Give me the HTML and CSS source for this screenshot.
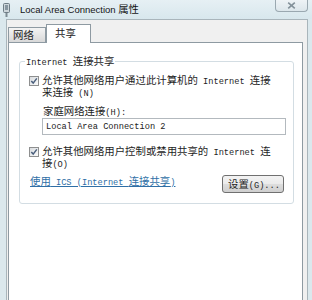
FILE: index.html
```html
<!DOCTYPE html>
<html lang="zh-CN">
<head>
<meta charset="utf-8">
<title>Local Area Connection 属性</title>
<link rel="stylesheet" href="styles.css">
</head>
<body>
<div class="window">
  <header class="titlebar">
    <svg class="app-icon" viewBox="0 0 7 14" width="7" height="14">
      <rect x="0.5" y="0.5" width="6" height="9" rx="1" fill="#cdd6db" stroke="#6f7d86"/>
      <rect x="2" y="2" width="3" height="5" fill="#8796a0"/>
      <rect x="2.5" y="10" width="2" height="4" fill="#7d8b93"/>
    </svg>
    <span class="title">Local Area Connection <span class="title-cjk">属性</span></span>
    <button class="close" type="button" aria-label="关闭">
      <svg viewBox="0 0 9 7" width="9" height="7">
        <path d="M1.2 0.6 L7.8 6.4 M7.8 0.6 L1.2 6.4" stroke="#83919a" stroke-width="1.6" fill="none"/>
      </svg>
    </button>
  </header>
  <div class="client">
    <div class="tabs">
      <div class="tab">网络</div>
      <div class="tab active">共享</div>
    </div>
    <div class="page">
      <fieldset class="group">
        <legend><span class="lat">Internet </span>连接共享</legend>
        <div class="group-body">
          <div class="check-row">
            <span class="checkbox"><svg viewBox="0 0 8 8" width="8" height="8"><path d="M1.3 3.9 L3.2 6.1 L6.8 1.4" fill="none" stroke="#4b5f7c" stroke-width="1.5"/></svg></span>
            <div class="check-text">允许其他网络用户通过此计算机的<span class="lat"> Internet </span>连接<br>来连接<span class="lat"> (N)</span></div>
          </div>
          <div class="field">
            <label class="field-label" for="home">家庭网络连接<span class="lat">(H):</span></label>
            <input class="field-input" id="home" type="text" value="Local Area Connection 2" readonly>
          </div>
          <div class="check-row second">
            <span class="checkbox"><svg viewBox="0 0 8 8" width="8" height="8"><path d="M1.3 3.9 L3.2 6.1 L6.8 1.4" fill="none" stroke="#4b5f7c" stroke-width="1.5"/></svg></span>
            <div class="check-text">允许其他网络用户控制或禁用共享的<span class="lat"> Internet </span>连<br>接<span class="lat">(O)</span></div>
          </div>
          <div class="actions">
            <a class="link" href="#">使用<span class="lat"> ICS (Internet </span>连接共享<span class="lat">)</span></a>
            <button class="btn" type="button">设置<span class="lat">(G)...</span></button>
          </div>
        </div>
      </fieldset>
    </div>
  </div>
</div>
</body>
</html>
```
FILE: styles.css
```css
html, body {
  margin: 0;
  padding: 0;
}

body {
  width: 312px;
  height: 300px;
  overflow: hidden;
  background: #dbe8ed;
  font-family: "Noto Sans CJK SC", sans-serif;
  font-size: 10.4px;
  line-height: 12px;
  color: #1e1e1e;
}

.lat {
  font-family: "Liberation Mono", monospace;
  font-size: 8.67px;
  line-height: 0;
}

.window {
  display: flex;
  flex-direction: column;
  height: 300px;
}

.titlebar {
  flex: none;
  height: 19px;
  display: flex;
  align-items: center;
  padding-left: 3px;
  background: linear-gradient(#e6f0f4, #d8e7ed);
}

.app-icon {
  flex: none;
  margin-right: 10px;
}

.title {
  font-family: "Liberation Sans", sans-serif;
  font-size: 9.5px;
  color: #151515;
  white-space: nowrap;
}

.title-cjk {
  font-family: "Noto Sans CJK SC", sans-serif;
  font-size: 10.4px;
}

.close {
  margin-left: auto;
  margin-right: 4px;
  align-self: flex-start;
  width: 33px;
  height: 12px;
  padding: 0;
  border: 1px solid #9aa8b0;
  border-top: 0;
  border-radius: 0 0 4px 4px;
  background: linear-gradient(#eef3f6, #dce6eb);
  display: flex;
  align-items: center;
  justify-content: center;
}

.client {
  flex: 1;
  margin: 0 4px 0 6px;
  border: 1px solid #a9b5bb;
  border-bottom: 0;
  background: #f0f0f0;
  padding: 0 4px 0 1px;
  display: flex;
  flex-direction: column;
}

.tabs {
  flex: none;
  height: 22px;
  display: flex;
  align-items: flex-end;
}

.tab {
  box-sizing: border-box;
  width: 38px;
  height: 15px;
  padding-left: 4px;
  border: 1px solid #8e9aa2;
  border-bottom: 0;
  background: linear-gradient(#f4f4f4, #e6e6e6 50%, #d8d8d8);
  display: flex;
  align-items: center;
  color: #222;
}

.tab.active {
  width: 45px;
  height: 19px;
  padding-left: 8px;
  padding-bottom: 2px;
  margin-bottom: -1px;
  background: #fff;
  position: relative;
  z-index: 1;
}

.page {
  flex: 1;
  background: #fff;
  border: 1px solid #8e9aa2;
  border-bottom: 0;
}

.group {
  margin: 12px 8px 0 10px;
  padding: 0;
  border: 1px solid #d3dde3;
  border-radius: 3px;
  min-width: 0;
}

.group legend {
  margin-left: 5px;
  padding: 0 1px;
  line-height: 12px;
}

.group-body {
  padding: 7px 7px 10px 9px;
}

.check-row {
  display: flex;
}

.check-row.second {
  margin-top: 10px;
}

.checkbox {
  flex: none;
  box-sizing: border-box;
  width: 10px;
  height: 10px;
  margin: 2px 3px 0 0;
  border: 1px solid #8e8f8f;
  background: linear-gradient(135deg, #d9dcdf, #fbfbfb);
  display: flex;
  align-items: center;
  justify-content: center;
}

.check-text {
  white-space: nowrap;
}

.field {
  margin-top: 7px;
  padding-left: 13px;
}

.field-label {
  display: block;
  padding-left: 1px;
}

.field-input {
  display: block;
  box-sizing: border-box;
  margin: 1px 0 0;
  width: 244px;
  height: 17px;
  padding: 0 0 0 3px;
  border: 1px solid #b3b9be;
  background: #fff;
  font-family: "Liberation Mono", monospace;
  font-size: 8.67px;
  color: #222;
  outline: none;
}

.actions {
  margin-top: 6px;
  display: flex;
  justify-content: space-between;
  align-items: flex-start;
}

.link {
  margin-left: 1px;
  color: #2f6fa6;
  text-decoration: underline;
}

.btn {
  box-sizing: border-box;
  width: 62px;
  height: 18px;
  margin-right: 2px;
  padding: 0 0 0 5px;
  border: 1px solid #707070;
  border-radius: 3px;
  background: linear-gradient(#f3f3f3, #ebebeb 48%, #dddddd 52%, #cfcfcf);
  font: inherit;
  color: #1e1e1e;
  text-align: left;
  white-space: nowrap;
}
```
